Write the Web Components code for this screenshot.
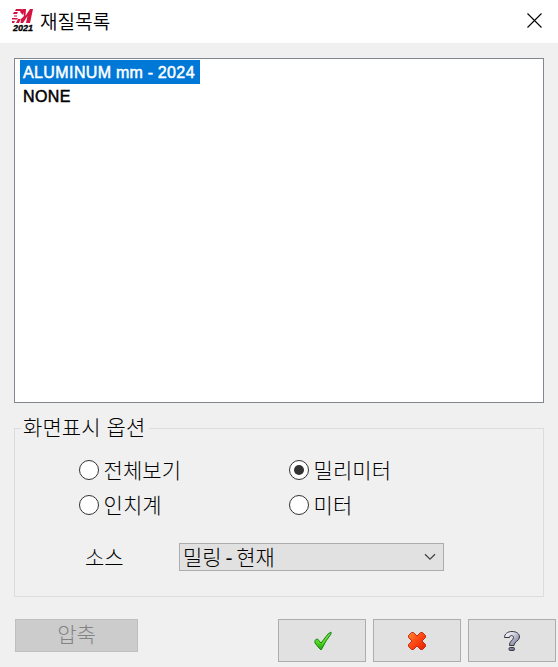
<!DOCTYPE html>
<html lang="ko">
<head>
<meta charset="utf-8">
<title>재질목록</title>
<style>
  body { margin:0; overflow:hidden; background:#f0f0f0; }
</style>
</head>
<body>
<material-dialog>
  <title-bar slot="title">재질목록</title-bar>
  <material-list slot="list">
    <material-item selected>ALUMINUM mm - 2024</material-item>
    <material-item>NONE</material-item>
  </material-list>
  <option-group slot="options" label="화면표시 옵션">
    <radio-option>전체보기</radio-option>
    <radio-option checked>밀리미터</radio-option>
    <radio-option>인치계</radio-option>
    <radio-option>미터</radio-option>
    <source-select slot="source" label="소스">밀링 - 현재</source-select>
  </option-group>
  <dialog-button slot="actions" disabled>압축</dialog-button>
  <dialog-button slot="actions" icon="ok"></dialog-button>
  <dialog-button slot="actions" icon="cancel"></dialog-button>
  <dialog-button slot="actions" icon="help"></dialog-button>
</material-dialog>
<script>
class BaseElement extends HTMLElement {
  constructor() {
    super();
    this.attachShadow({mode:"open"});
    const template = document.createElement('template');
    template.innerHTML = this.markup();
    this.shadowRoot.append(template.content.cloneNode(true));
  }
}

class MaterialDialog extends BaseElement {
  markup() {
    return `
      <style>
        :host { display:flex; flex-direction:column; width:558px; height:667px; background:#f0f0f0; color:#000;
          font:300 21px/24px "Liberation Sans","Noto Sans CJK KR",sans-serif; }
        main { padding:15px 14px 0; }
        footer { display:flex; align-items:flex-start; padding:22px 2px 0 15px; gap:7px; }
      </style>
      <slot name="title"></slot>
      <main>
        <slot name="list"></slot>
        <slot name="options"></slot>
      </main>
      <footer><slot name="actions"></slot></footer>`;
  }
}

class TitleBar extends BaseElement {
  markup() {
    return `
      <style>
        :host { display:flex; align-items:flex-start; box-sizing:border-box; height:43px; padding:8px 15px 0 11px; background:#fff;
          font:350 19px/26px "Noto Sans CJK KR",sans-serif; }
        .logo { width:24px; height:24px; flex:none; }
        .label { flex:1; margin-left:5px; letter-spacing:.1px; }
        .close { width:16px; height:16px; margin-top:4px; }
      </style>
      <svg class="logo" viewBox="0 0 24 24">
        <g fill="#d3123f">
          <path d="M12 1h3l-.5 7L19 1h3l-3 14h-4l1.500-7-4.500 7H9.500l.5-5-2 5H5l2-4h3l3-3-1-4H9l1-2z"/>
          <path d="M5 1h6l-1 2H4zM3 4h4l-1 2H2zM9 4h3v3zM1 10h6l-1 1.500H1zM1 13h3l-1 2H1zM3 7.500h3v1H3z"/>
        </g>
        <text x="2" y="22.900" textLength="20" lengthAdjust="spacingAndGlyphs" font-family="Liberation Sans" font-size="8.5" font-weight="700" font-style="italic" stroke="#000" stroke-width=".3">2021</text>
      </svg>
      <span class="label"><slot></slot></span>
      <svg class="close" viewBox="0 0 16 16"><path d="M.5 1.500l14 14M14.500 1.500l-14 14" stroke="#000" stroke-width="1.1"/></svg>`;
  }
}

class MaterialList extends BaseElement {
  markup() {
    return `
      <style>
        :host { display:flex; flex-direction:column; align-items:flex-start; box-sizing:border-box;
          width:530px; height:345px; padding:1px 5px; border:1px solid #828790; background:#fff; }
      </style>
      <slot></slot>`;
  }
}

class MaterialItem extends BaseElement {
  markup() {
    return `
      <style>
        :host { display:block; box-sizing:border-box; height:24px; padding:0 5px 0 3px; white-space:nowrap;
          font:400 16px/25px "Liberation Sans",Arial,sans-serif; letter-spacing:.4px; word-spacing:-.5px; -webkit-text-stroke:.5px currentColor; }
        :host([selected]) { width:180px; background:#0078d7; color:#fff; }
      </style>
      <slot></slot>`;
  }
}

class OptionGroup extends BaseElement {
  markup() {
    return `
      <style>
        :host { display:block; margin-top:15px; }
        fieldset { box-sizing:border-box; width:530px; height:179px; margin:0; padding:0; border:1px solid #dcdcdc; }
        legend { height:20px; margin-left:6px; padding:0 2px; width:124px; line-height:19px; letter-spacing:.1px; white-space:nowrap; }
        .radios { display:grid; grid-template-columns:210px 210px; grid-auto-rows:35px; padding:14px 0 0 64px; }
      </style>
      <fieldset>
        <legend></legend>
        <div class="radios"><slot></slot></div>
        <slot name="source"></slot>
      </fieldset>`;
  }
  connectedCallback() {
    this.shadowRoot.querySelector('legend').textContent = this.getAttribute('label');
  }
}

class RadioOption extends BaseElement {
  markup() {
    return `
      <style>
        :host { display:flex; align-items:center; height:35px; }
        i { display:grid; place-items:center; box-sizing:border-box; width:20px; height:20px; border:1px solid #333; border-radius:50%; background:#fff; }
        :host([checked]) i::after { content:""; width:10px; height:10px; border-radius:50%; background:#333; }
        span { margin-left:4.5px; padding-top:2px; letter-spacing:.1px; white-space:nowrap; }
      </style>
      <i></i><span><slot></slot></span>`;
  }
}

class SourceSelect extends BaseElement {
  markup() {
    return `
      <style>
        :host { display:flex; align-items:center; margin-top:21px; padding-left:70px; }
        label { width:94px; padding-top:1px; }
        .box { display:flex; align-items:center; justify-content:space-between; box-sizing:border-box; width:265px; height:28px;
          padding:0 7px 0 3px; border:1px solid #adadad; background:#e1e1e1; white-space:nowrap; }
        .box span { padding-top:1px; word-spacing:-2px; }
        svg { width:12px; height:8px; }
      </style>
      <label></label>
      <div class="box"><span><slot></slot></span>
        <svg viewBox="0 0 12 8"><path d="M1 1.200l5 5 5-5" fill="none" stroke="#444" stroke-width="1.3"/></svg>
      </div>`;
  }
  connectedCallback() {
    this.shadowRoot.querySelector('label').textContent = this.getAttribute('label');
  }
}

const icons = {
  ok: `<svg viewBox="0 0 20 20">
    <defs><linearGradient id="g" x2="0" y2="1"><stop stop-color="#7be05a"/><stop offset=".55" stop-color="#55dc1c"/><stop offset="1" stop-color="#1f9d10"/></linearGradient></defs>
    <path d="M3 9.500L4.500 8h1L9 12l7-9 3-2v2l-5 7-4 7.500-1 1.500-2-2-4-5z" fill="url(#g)" stroke="#138512"/></svg>`,
  cancel: `<svg viewBox="0 0 20 20">
    <defs><linearGradient id="g" x2="1" y2="1"><stop stop-color="#ff8a2a"/><stop offset=".45" stop-color="#ff4b13"/><stop offset="1" stop-color="#e32000"/></linearGradient></defs>
    <path d="M4.500 1.500h2L10 5l3.500-3.500h2l3 3v2L15 10l3.500 3.500v2l-3 3h-2L10 15l-3.500 3.500h-2l-3-3v-2L5 10 1.500 6.500v-2z" fill="url(#g)" stroke="#c52a16"/></svg>`,
  help: `<svg viewBox="0 0 20 20">
    <defs><linearGradient id="g" gradientUnits="userSpaceOnUse" x1="3" y1="1" x2="15" y2="14"><stop stop-color="#fff"/><stop offset=".4" stop-color="#d5d7e4"/><stop offset="1" stop-color="#777b97"/></linearGradient></defs>
    <g fill="url(#g)" stroke="#34353f"><path d="M2.500 6.500C2.500 3 5.500.5 10 .5s7.500 2.200 7.500 5.500c0 4-5.500 4.500-5.500 8.500H7.500c-.5-4.500 4-5 4-8C11.500 4 7.500 4 7.500 6.500z"/><rect x="7" y="16.500" width="5.500" height="3" rx="1.2"/></g></svg>`
};

class DialogButton extends BaseElement {
  markup() {
    return `
      <style>
        :host { display:flex; align-items:center; justify-content:center; box-sizing:border-box; width:88px; height:43px;
          border:1px solid #adadad; background:#e1e1e1; }
        :host([disabled]) { width:123px; height:33px; margin-right:133px; padding:0 0 1px; border-color:#bfbfbf; background:#ccc; color:#838383; }
        svg { width:20px; height:20px; }
      </style>
      <slot></slot>`;
  }
  connectedCallback() {
    const icon = icons[this.getAttribute('icon')];
    if (icon) {
      this.shadowRoot.querySelector('slot').insertAdjacentHTML('afterend', icon);
    }
  }
}

customElements.define('material-dialog', MaterialDialog);
customElements.define('title-bar', TitleBar);
customElements.define('material-list', MaterialList);
customElements.define('material-item', MaterialItem);
customElements.define('option-group', OptionGroup);
customElements.define('radio-option', RadioOption);
customElements.define('source-select', SourceSelect);
customElements.define('dialog-button', DialogButton);
</script>
</body>
</html>
